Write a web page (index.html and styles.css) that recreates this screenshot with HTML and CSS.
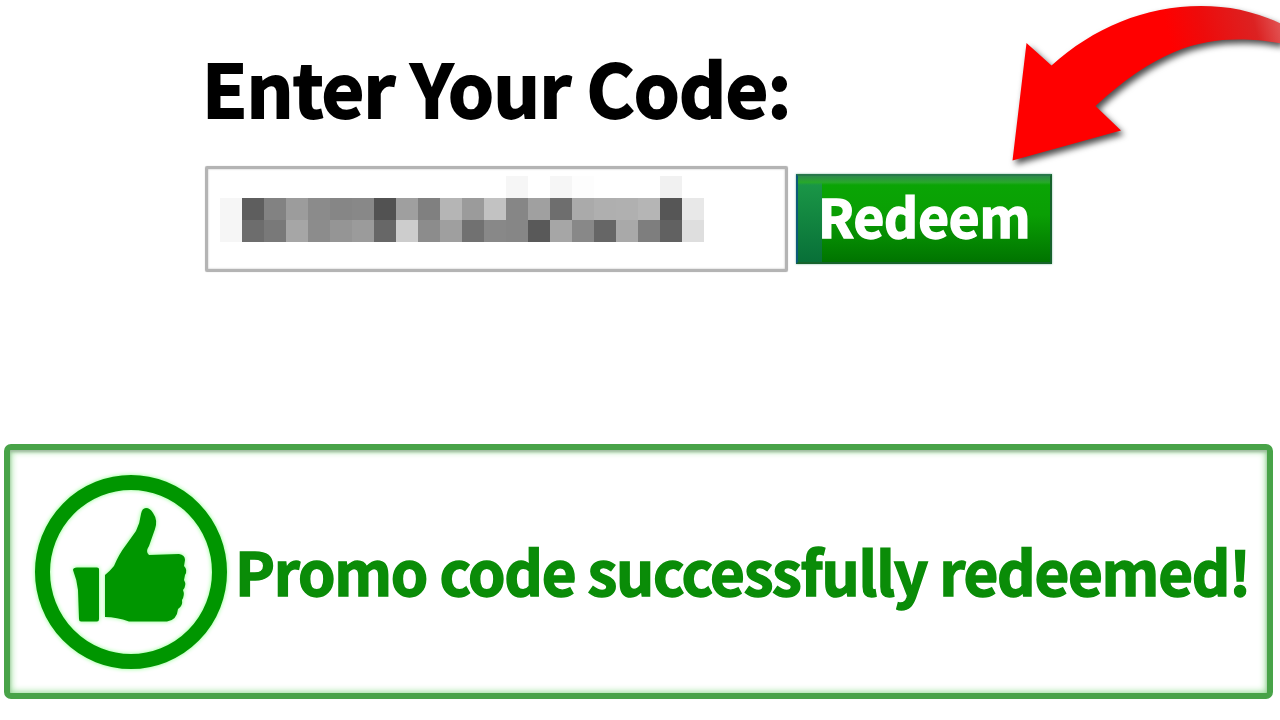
FILE: index.html
```html
<!DOCTYPE html>
<html lang="en">
<head>
  <meta charset="UTF-8">
  <title>Redeem Code</title>
  <link rel="stylesheet" href="styles.css">
</head>
<body>

<div class="redeem">
  <h1 class="redeem-title">Enter Your Code:</h1>
  <div class="redeem-row">
    <div class="code-box">
      <div class="mosaic" id="mosaic"></div>
    </div>
    <button class="redeem-btn"><span class="redeem-label">Redeem</span></button>
  </div>
</div>

<div class="alert">
  <svg class="alert-icon" viewBox="0 0 200 200">
    <ellipse cx="100" cy="100" rx="88.5" ry="89.5" fill="none" stroke="#009600" stroke-width="15"/>
    <path fill="#009600" d="M42 98 Q42 95.500 46 95.500 L66 95.500 Q68 95.500 68 97 L68 147 Q68 149.500 66 149.500 L50 149.500 Q48 149.500 48 147 L47 118 Q46 108 42 98 Z"/>
    <path fill="#009600" d="M74 103 Q79 99 83 94 Q88 82 95 73 L105 59 Q109 51 110 42 Q111 36 115 36 Q119 36 122 41 Q127 48 124 57 L118 74 Q114 80 118 83 L148 82 Q154 83 154 88 L153 94 Q157 98 154 103 L153 108 Q156 113 152 118 Q154 123 151 128 Q152 134 147 137 Q146 148 136 149.500 L98 149.500 Q86 145 74 145 Z"/>
  </svg>
  <p class="alert-text">Promo code successfully redeemed!</p>
</div>

<svg class="arrow" viewBox="0 0 290 180">
  <defs>
    <linearGradient id="arrowFill" gradientUnits="userSpaceOnUse" x1="180" y1="40" x2="290" y2="10">
      <stop offset="0" stop-color="#ff0000"/>
      <stop offset="0.3" stop-color="#ee0b0b"/>
      <stop offset="0.75" stop-color="#dc2222"/>
      <stop offset="1" stop-color="#e25a5a"/>
    </linearGradient>
  </defs>
  <path fill="url(#arrowFill)" d="M22.500 160.500 L36.500 43 L61.500 65.500 C103 28 155 6 211 6 C242 6 268 12 300 28 L300 45 C278 41 266 39.500 250 39.500 C210 39 166 50 105.500 106 L131 130.500 Z"/>
</svg>

<script>
  // shades of the blurred code, 22 cells per row
  const rows = [
    "ff ff ff ff ff ff ff ff ff ff ff ff ff f6 ff f6 fd ff ff ff f1 ff",
    "f6 5e 82 9c 8b 86 88 52 9f 80 b5 9b c2 86 a0 6e aa af b0 b5 56 e8",
    "f6 6d 79 a6 8c 95 9b 67 cd 8c 9f 71 88 86 59 a6 88 66 a9 7e 61 de"
  ];
  const mosaic = document.getElementById("mosaic");

  rows.forEach(row => row.split(" ").forEach(shade => {
    const cell = document.createElement("span");
    cell.style.background = `#${shade}${shade}${shade}`;
    mosaic.appendChild(cell);
  }));
</script>

</body>
</html>
```

FILE: styles.css
```css
* {
  box-sizing: border-box;
}

body {
  margin: 0;
  height: 720px;
  overflow: hidden;
  position: relative;
  background: #fff;
  font-family: "Noto Sans CJK SC", "Open Sans", sans-serif;
  font-weight: bold;
}

.redeem {
  height: 444px;
  padding: 48px 0 0 205px;
}

.redeem-title {
  margin: 0 0 42px -3px;
  font-size: 73.5px;
  line-height: 76px;
  letter-spacing: -0.8px;
  -webkit-text-stroke: 1.8px #000;
  white-space: nowrap;
  color: #000;
}

.redeem-row {
  display: flex;
  align-items: flex-start;
  gap: 8px;
}

.code-box {
  width: 583px;
  height: 106px;
  padding: 7px 12px;
  border: 3px solid #b4b4b4;
  border-radius: 2px;
  box-shadow: 0 0 1px #b4b4b4, inset 0 0 2px #b4b4b4;
}

.mosaic {
  display: grid;
  grid-template-columns: repeat(22, 22px);
  grid-auto-rows: 22px;
}

.redeem-btn {
  width: 256px;
  height: 90px;
  margin-top: 8px;
  padding: 0 0 8px 20px;
  border: 2px solid #17632c;
  border-top-color: #28784a;
  border-left-color: #0b5a78;
  background:
    linear-gradient(#2f8a4c, #27a82a 70%, transparent) 0 0 / 100% 9px no-repeat,
    linear-gradient(#1c9a48, #087038) 0 0 / 24px 100% no-repeat,
    linear-gradient(#0aa605, #0a9f04 45%, #007400);
  box-shadow: 0 0 2px #7fb8a0;
  text-align: left;
  font-family: inherit;
  font-weight: bold;
}

.redeem-label {
  display: block;
  font-size: 53px;
  line-height: 78px;
  letter-spacing: -0.1px;
  -webkit-text-stroke: 1.5px #fff;
  color: #fff;
}

.alert {
  width: 1269px;
  height: 255px;
  margin-left: 4px;
  padding-left: 21px;
  display: flex;
  align-items: center;
  border: 6px solid #48a348;
  border-radius: 7px;
  box-shadow: inset 0 2px 3px #9fb99f, inset 0 0 7px 1px #8fdc8f;
}

.alert-icon {
  width: 200px;
  height: 200px;
  flex: none;
  filter: blur(0.6px) drop-shadow(0 0 2px #8f8);
}

.alert-text {
  margin: 0 0 3px 4px;
  font-size: 60px;
  line-height: 62px;
  letter-spacing: -1.27px;
  -webkit-text-stroke: 1.5px #0a8c08;
  white-space: nowrap;
  color: #0a8c08;
}

.arrow {
  position: absolute;
  top: 0;
  right: 0;
  width: 290px;
  height: 180px;
  filter: drop-shadow(3px 4px 3px rgba(0, 0, 0, 0.7));
}
```
